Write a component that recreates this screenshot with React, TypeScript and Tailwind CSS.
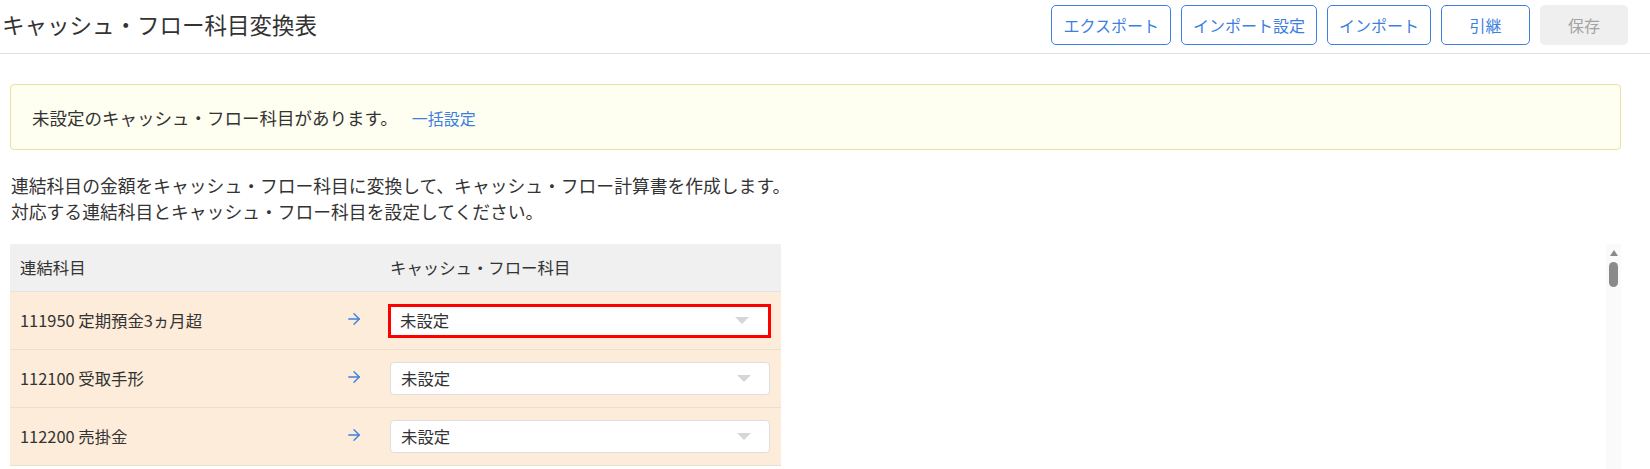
import React from 'react';
import { ArrowRight } from 'lucide-react';

const rows = [
  { code: '111950', name: '定期預金3ヵ月超', value: '未設定', error: true },
  { code: '112100', name: '受取手形', value: '未設定', error: false },
  { code: '112200', name: '売掛金', value: '未設定', error: false },
];

const buttons = ['エクスポート', 'インポート設定', 'インポート', '引継'];

export default function App() {
  return (
    <div
      className="h-screen overflow-hidden bg-white text-[#333333] flex flex-col"
      style={{ fontFamily: "'Noto Sans CJK JP', 'Noto Sans', sans-serif" }}
    >
      {/* Header */}
      <div className="h-[54px] shrink-0 flex items-center justify-between pl-[2px] pr-[22px] border-b border-[#e2e2e2]">
        <h1 className="text-[22.5px] leading-none pb-[5px]">キャッシュ・フロー科目変換表</h1>
        <div className="flex items-center gap-[10px] pb-[3px]">
          {buttons.map((label) => (
            <button
              key={label}
              className="h-[40px] min-w-[89px] px-[11px] border border-[#3d7fe0] rounded-[5px] bg-white text-[#3d7fe0] text-[16px]"
            >
              {label}
            </button>
          ))}
          <button
            disabled
            className="h-[40px] min-w-[88px] px-[11px] rounded-[5px] bg-[#efefef] text-[#a3a3a3] text-[16px]"
          >
            保存
          </button>
        </div>
      </div>

      <div className="flex-1 min-h-0 flex flex-col pl-[10px] pr-[29px]">
        {/* Warning banner */}
        <div className="mt-[30px] h-[66px] shrink-0 flex items-center pl-[21px] pt-[2px] bg-[#fefef1] border border-[#e8e3a3] rounded-[4px]">
          <span className="text-[17.5px]">未設定のキャッシュ・フロー科目があります。</span>
          <a className="ml-[14px] text-[16px] text-[#3d7fe0] cursor-pointer">一括設定</a>
        </div>

        {/* Description */}
        <div className="mt-[22px] pl-[1px] text-[17.8px] leading-[26px]">
          <p>連結科目の金額をキャッシュ・フロー科目に変換して、キャッシュ・フロー計算書を作成します。</p>
          <p>対応する連結科目とキャッシュ・フロー科目を設定してください。</p>
        </div>

        {/* Table + scrollbar */}
        <div className="mt-[20px] flex-1 min-h-0 flex">
          <div className="w-[771px] shrink-0 text-[16.4px]">
            <div className="h-[48px] flex items-center bg-[#f0f0f0] border-b border-[#e3e3e3]">
              <div className="w-[380px] pl-[10px]">連結科目</div>
              <div className="flex-1">キャッシュ・フロー科目</div>
            </div>
            {rows.map((row) => (
              <div
                key={row.code}
                className="h-[58px] flex items-center bg-[#fdecd9] border-b border-[#eadfd0]"
              >
                <div className="w-[324px] pl-[10px]">
                  {row.code} {row.name}
                </div>
                <div className="w-[40px] flex justify-center pb-[3px]">
                  <ArrowRight className="w-[18px] h-[18px] text-[#3d7fe0]" strokeWidth={1.8} />
                </div>
                <div className="flex-1 pl-[16px] pr-[11px]">
                  {row.error ? (
                    <div className="h-[34px] -ml-[2px] -mr-[1px] flex items-center justify-between pl-[9px] pr-[19px] bg-white border-[3px] border-[#ff0000]">
                      <span>{row.value}</span>
                      <span className="w-0 h-0 border-l-[7px] border-r-[7px] border-t-[7px] border-l-transparent border-r-transparent border-t-[#d6d6d6]" />
                    </div>
                  ) : (
                    <div className="h-[33px] flex items-center justify-between pl-[10px] pr-[18px] bg-white border border-[#dedede] rounded-[4px]">
                      <span>{row.value}</span>
                      <span className="w-0 h-0 border-l-[7px] border-r-[7px] border-t-[7px] border-l-transparent border-r-transparent border-t-[#d6d6d6]" />
                    </div>
                  )}
                </div>
              </div>
            ))}
          </div>

          <div className="flex-1" />

          {/* Scrollbar */}
          <div className="w-[15px] shrink-0 bg-[#fafafa] flex flex-col items-center pt-[6px]">
            <span className="w-0 h-0 border-l-[4px] border-r-[4px] border-b-[6px] border-l-transparent border-r-transparent border-b-[#8a8a8a]" />
            <div className="mt-[6px] w-[9px] h-[25px] rounded-full bg-[#8a8a8a]" />
          </div>
        </div>
      </div>
    </div>
  );
}
